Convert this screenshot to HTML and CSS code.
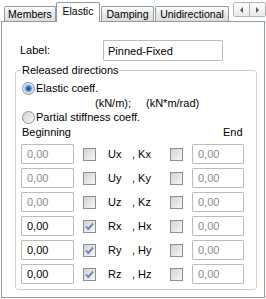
FILE: index.html
```html
<!DOCTYPE html>
<html lang="en">
<head>
<meta charset="UTF-8">
<meta name="viewport" content="width=device-width, initial-scale=1.0">
<title>Elastic</title>
<link rel="stylesheet" href="styles.css">
</head>

<body>
    <div class="tabs">
        <div class="tab tab-members">Members</div>
        <div class="tab tab-elastic active">Elastic</div>
        <div class="tab tab-damping">Damping</div>
        <div class="tab tab-uni">Unidirectional</div>
        <div class="scroll">
            <span class="scroll-btn"><span class="arrow arrow-left"></span></span>
            <span class="scroll-btn"><span class="arrow arrow-right"></span></span>
        </div>
    </div>

    <div class="panel">
        <div class="label-row">
            <span class="label">Label:</span>
            <input class="field field-label" type="text" value="Pinned-Fixed">
        </div>

        <fieldset class="group">
            <legend>Released directions</legend>
            <div class="option"><span class="radio on"></span>Elastic coeff.</div>
            <div class="units"><span class="unit-first">(kN/m);</span><span>(kN*m/rad)</span></div>
            <div class="option"><span class="radio"></span>Partial stiffness coeff.</div>
            <div class="ends"><span class="end-first">Beginning</span><span>End</span></div>

            <div class="row">
                <input class="field num" type="text" value="0,00" disabled>
                <span class="check"></span>
                <span class="axis"><span class="axis-a">Ux</span>, Kx</span>
                <span class="check"></span>
                <input class="field num num-end" type="text" value="0,00" disabled>
            </div>
            <div class="row">
                <input class="field num" type="text" value="0,00" disabled>
                <span class="check"></span>
                <span class="axis"><span class="axis-a">Uy</span>, Ky</span>
                <span class="check"></span>
                <input class="field num num-end" type="text" value="0,00" disabled>
            </div>
            <div class="row">
                <input class="field num" type="text" value="0,00" disabled>
                <span class="check"></span>
                <span class="axis"><span class="axis-a">Uz</span>, Kz</span>
                <span class="check"></span>
                <input class="field num num-end" type="text" value="0,00" disabled>
            </div>
            <div class="row">
                <input class="field num" type="text" value="0,00">
                <span class="check checked"><svg width="11" height="11" viewBox="0 0 11 11"><path d="M2 5.5 L4.3 8 L9 2.5" fill="none" stroke="#6f8cbc" stroke-width="2"/></svg></span>
                <span class="axis"><span class="axis-a">Rx</span>, Hx</span>
                <span class="check"></span>
                <input class="field num num-end" type="text" value="0,00" disabled>
            </div>
            <div class="row">
                <input class="field num" type="text" value="0,00">
                <span class="check checked"><svg width="11" height="11" viewBox="0 0 11 11"><path d="M2 5.5 L4.3 8 L9 2.5" fill="none" stroke="#6f8cbc" stroke-width="2"/></svg></span>
                <span class="axis"><span class="axis-a">Ry</span>, Hy</span>
                <span class="check"></span>
                <input class="field num num-end" type="text" value="0,00" disabled>
            </div>
            <div class="row">
                <input class="field num" type="text" value="0,00">
                <span class="check checked"><svg width="11" height="11" viewBox="0 0 11 11"><path d="M2 5.5 L4.3 8 L9 2.5" fill="none" stroke="#6f8cbc" stroke-width="2"/></svg></span>
                <span class="axis"><span class="axis-a">Rz</span>, Hz</span>
                <span class="check"></span>
                <input class="field num num-end" type="text" value="0,00" disabled>
            </div>
        </fieldset>
    </div>
</body>

</html>
```

FILE: styles.css
```css
body {
    margin: 0;
    background: #fff;
    font-family: "Liberation Sans", Arial, sans-serif;
    font-size: 11px;
    line-height: 13px;
    color: #000;
}

/* tab strip */
.tabs {
    display: flex;
    align-items: flex-end;
    height: 21px;
    padding-left: 4px;
}

.tab {
    box-sizing: border-box;
    height: 15px;
    padding-top: 1px;
    border: 1px solid #919b9c;
    border-bottom: none;
    border-radius: 2px 2px 0 0;
    background: linear-gradient(#fdfdfd, #ececeb 40%, #dcdcd8);
    font-size: 10.5px;
    text-align: center;
    white-space: nowrap;
}

.tab-members {
    width: 52px;
}

.tab-elastic {
    width: 44px;
    margin-right: 1px;
}

.tab-damping {
    width: 53px;
    margin-right: 1px;
}

.tab-uni {
    width: 74px;
}

.tab.active {
    position: relative;
    z-index: 1;
    height: 20px;
    margin-bottom: -1px;
    padding-top: 2px;
    background: #fff;
}

.scroll {
    align-self: flex-start;
    display: flex;
    margin: 2px 0 0 4px;
    border: 1px solid #b5b5b8;
    border-radius: 2px;
}

.scroll-btn {
    display: flex;
    align-items: center;
    justify-content: center;
    width: 15px;
    height: 13px;
    background: linear-gradient(#fdfdfd, #e8e8e6);
}

.scroll-btn + .scroll-btn {
    border-left: 1px solid #b5b5b8;
}

.arrow {
    width: 0;
    height: 0;
    border-top: 3px solid transparent;
    border-bottom: 3px solid transparent;
}

.arrow-left {
    border-right: 3px solid #5a5a5a;
}

.arrow-right {
    border-left: 3px solid #5a5a5a;
}

/* panel */
.panel {
    box-sizing: border-box;
    width: 264px;
    height: 277px;
    margin-left: 1px;
    border: 1px solid #919b9c;
    background: #fff;
}

.label-row {
    display: flex;
    align-items: center;
    margin-top: 18px;
    padding-left: 18px;
}

.label {
    width: 83px;
}

.field {
    box-sizing: border-box;
    margin: 0;
    border: 1px solid #bcbcbc;
    border-radius: 1px;
    background: #fff;
    font-family: inherit;
    font-size: 11px;
    color: #000;
    outline: none;
}

.field-label {
    width: 120px;
    height: 21px;
    padding: 0 4px;
}

.group {
    margin: 3px 7px 0 13px;
    padding: 0 0 5px;
    min-width: 0;
    border: 1px solid #d0d0bf;
    border-radius: 3px;
}

.group legend {
    margin-left: 5px;
    padding: 0 1px;
    line-height: 13px;
}

.option {
    display: flex;
    align-items: center;
    height: 14.5px;
    padding-left: 6px;
}

.group .option:first-of-type {
    margin-top: 4px;
}

.radio {
    box-sizing: border-box;
    width: 13px;
    height: 13px;
    margin-right: 1px;
    border: 1px solid #8e9296;
    border-radius: 50%;
    background: linear-gradient(135deg, #d2d2d0, #f8f8f8);
}

.radio.on {
    background: radial-gradient(circle, #0c4f9e 0, #2778c9 2px, #8ec6ee 3.5px, #d9d9d7 4.5px, #f6f6f6 6px);
}

.units {
    height: 14.5px;
    line-height: 14.5px;
    padding-left: 79px;
}

.unit-first {
    display: inline-block;
    width: 51px;
}

.ends {
    height: 14.5px;
    line-height: 14.5px;
    padding-left: 6px;
}

.end-first {
    display: inline-block;
    width: 201px;
}

/* coefficient rows */
.row {
    display: flex;
    align-items: center;
    height: 20px;
    padding-left: 5px;
    margin-bottom: 4px;
}

.ends + .row {
    margin-top: 5px;
}

.row:last-child {
    margin-bottom: 0;
}

.num {
    width: 53px;
    height: 20px;
    padding: 0 5px;
}

.num:disabled {
    color: #8d8d8d;
}

.num-end {
    width: 52px;
    margin-left: 9px;
}

.check {
    box-sizing: border-box;
    display: flex;
    align-items: center;
    justify-content: center;
    width: 13px;
    height: 13px;
    margin-left: 9px;
    border: 1px solid #8f8f8f;
    background: linear-gradient(135deg, #d4d4d2, #f7f7f7);
}

.axis {
    width: 62px;
    margin-left: 12px;
    white-space: nowrap;
}

.axis + .check {
    margin-left: 0;
}

.axis-a {
    display: inline-block;
    width: 24px;
}
```
